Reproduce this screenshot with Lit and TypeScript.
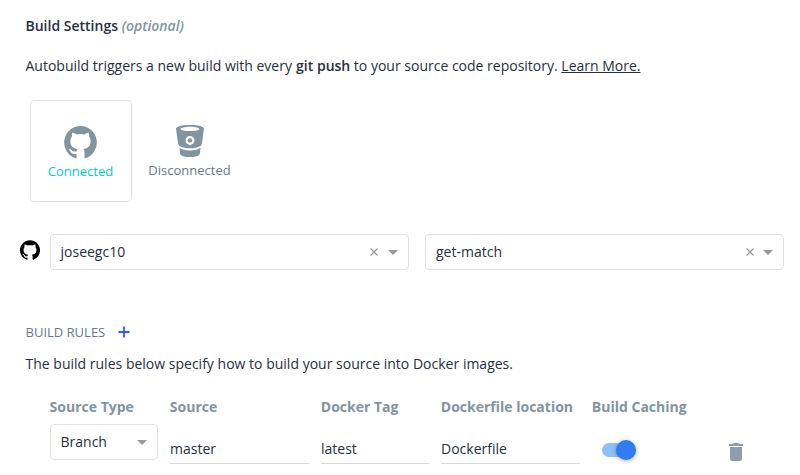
import { LitElement, html, css, svg } from "lit";
import { customElement, property } from "lit/decorators.js";

const CAT =
  "M16.3 0C7.3 0 0 7.3 0 16.3c0 7.2 4.7 13.3 11.1 15.5.8.1 1.1-.4 1.1-.8v-2.8c-4.5 1-5.5-2.2-5.5-2.2-.7-1.9-1.8-2.4-1.8-2.4-1.5-1 .1-1 .1-1 1.6.1 2.5 1.7 2.5 1.7 1.5 2.5 3.8 1.8 4.7 1.4.1-1.1.6-1.8 1-2.2-3.6-.4-7.4-1.8-7.4-8.1 0-1.8.6-3.2 1.7-4.4-.1-.3-.7-2 .2-4.2 0 0 1.4-.4 4.5 1.7 1.3-.4 2.7-.5 4.1-.5s2.8.2 4.1.5c3.1-2.1 4.5-1.7 4.5-1.7.9 2.2.3 3.9.2 4.3 1 1.1 1.7 2.6 1.7 4.4 0 6.3-3.8 7.6-7.4 8 .6.5 1.1 1.500 1.1 3V31c0 .4.3.9 1.1.8 6.500-2.200 11.100-8.300 11.100-15.500C32.600 7.300 25.300 0 16.300 0z";
const BADGE_CAT =
  "M16.500 0A16.500 16.500 0 0 0 11.600 32.200L12.500 32V28.100C9.300 28.500 7.700 27.700 6.800 26.100 6.200 25 5.600 24.200 4.700 23.600 4.500 23.100 5.800 22.900 6.800 23.600 7.900 24.400 8.200 26.200 12.600 25.400 12.700 24.300 13.100 23.500 13.700 23 9 22.300 6.400 20 6.400 15.200 6.400 13 7 11.500 8.100 10.200 7.700 8.900 7.800 7.900 8.200 6.700 9.700 6.600 11.200 7.400 12.600 8.400A17 17 0 0 1 20.400 8.400C21.800 7.400 23.300 6.600 24.800 6.700 25.200 7.900 25.300 8.900 24.900 10.200 26 11.500 26.600 13 26.600 15.200 26.600 20 24 22.300 19.300 23 20.100 23.600 20.500 24.600 20.500 26V32L21.400 32.200A16.500 16.500 0 0 0 16.500 0z";

@customElement("select-box")
export class SelectBox extends LitElement {
  @property() value = "";
  @property({ type: Boolean }) clearable = false;

  static styles = css`
    :host {
      box-sizing: border-box;
      display: flex;
      align-items: center;
      height: 36px;
      padding: 0 10px 0 9.5px;
      border: 1px solid #e0e2e5;
      border-radius: 4px;
      background: #fff;
      color: #27303d;
    }
    .value {
      flex: 1;
    }
    .clear {
      width: 8px;
      height: 8px;
      margin-right: var(--clear-gap, 10px);
      stroke: #999;
      stroke-width: 1.2;
    }
    .arrow {
      border: 5px solid transparent;
      border-top-color: #999;
      border-bottom: 0;
      margin-top: 1px;
    }
  `;

  render() {
    return html`<span class="value">${this.value}</span>
      ${this.clearable
        ? html`<svg class="clear" viewBox="0 0 8 8"><path d="M.5.5l7 7M7.5.5l-7 7" /></svg>`
        : null}
      <span class="arrow"></span>`;
  }
}

@customElement("app-root")
export class AppRoot extends LitElement {
  static styles = css`
    :host {
      box-sizing: border-box;
      display: block;
      width: 800px;
      height: 475px;
      overflow: hidden;
      padding: 16px 16px 0 25.5px;
      background: #fff;
      color: #27303d;
      font: 14px/20px "Open Sans", sans-serif;
    }
    .title {
      font-weight: 600;
    }
    .optional {
      color: #8394a1;
      font-style: italic;
    }
    .intro {
      margin-top: 20px;
    }
    .intro b {
      font-weight: 600;
      margin-left: 0.5px;
    }
    .link {
      text-decoration: underline;
    }
    .providers {
      display: flex;
      gap: 7px;
      margin: 24px 0 0 4.5px;
    }
    .provider {
      box-sizing: border-box;
      width: 102px;
      height: 102px;
      display: flex;
      flex-direction: column;
      align-items: center;
      padding: 25px 1px 0 0;
      color: #677a8c;
      font-size: 13px;
    }
    .provider.on {
      border: 1px solid #e0e2e5;
      border-radius: 4px;
      color: #00d1c6;
    }
    .provider svg {
      width: 33px;
      height: 33px;
      fill: #8394a1;
      margin-bottom: 2px;
    }
    .repo {
      display: flex;
      align-items: center;
      margin: 32px 0 0 -5.5px;
    }
    .repo > svg {
      width: 20px;
      height: 20px;
      margin: 0 10px 4px 0;
    }
    .repo select-box {
      width: 359px;
    }
    .repo select-box + select-box {
      margin-left: 16px;
      padding: 0 10px;
      --clear-gap: 9px;
    }
    .section {
      display: flex;
      align-items: center;
      gap: 13px;
      margin-top: 52px;
      color: #677a8c;
      font-size: 13px;
    }
    .plus {
      width: 12px;
      height: 12px;
      stroke: #2f5cff;
      stroke-width: 1.8;
    }
    .desc {
      margin-top: 12px;
      word-spacing: 0.05px;
    }
    .rules {
      display: grid;
      grid-template-columns: 108px 139px 108px 139px 108px 40px;
      column-gap: 12px;
      margin: 23px 0 0 24.5px;
    }
    .head {
      height: 27px;
      margin-left: -0.2px;
      color: #8394a1;
      font-weight: 700;
      white-space: nowrap;
    }
    .head:first-child {
      margin-left: -0.4px;
    }
    .field {
      box-sizing: border-box;
      height: 40px;
      padding-top: 15px;
      border-bottom: 1px solid #d9dbde;
    }
    .toggle {
      width: 30px;
      height: 14px;
      margin: 19px 0 0 10px;
      border-radius: 7px;
      background: #8fc0f8;
      display: flex;
      align-items: center;
    }
    .knob {
      flex: none;
      width: 20px;
      height: 20px;
      margin-left: 14px;
      border-radius: 50%;
      background: #2f7df0;
      box-shadow: 0 1px 4px rgba(0, 0, 0, 0.35);
    }
    .trash {
      width: 14px;
      height: 18px;
      margin: 19px 0 0 17px;
      fill: #8f9dab;
    }
  `;

  private heads = ["Source Type", "Source", "Docker Tag", "Dockerfile location", "Build Caching", ""];
  private fields = ["master", "latest", "Dockerfile"];

  private bucket = svg`
    <path fill-rule="evenodd" d="M17 0C8.5 0 3 1.6 3 3.8L5.200 19C5.500 21.500 10.500 23.300 17 23.300S28.500 21.500 28.800 19L31 3.800C31 1.600 25.500 0 17 0zM17 1.700c5.500 0 9.300 1 9.300 2.200s-3.800 2.200-9.300 2.200-9.300-1-9.300-2.200 3.800-2.200 9.300-2.200zM17 10.900a4.500 4.500 0 1 1 0 9 4.500 4.500 0 0 1 0-9z"/>
    <circle cx="17" cy="15.400" r="2.200"/>
    <path d="M6.400 22.700C8.500 24.400 12.500 25.400 17 25.400s8.500-1 10.600-2.700L26.800 28.900C26.200 30.800 22.500 32 17 32S7.800 30.800 7.200 28.900z"/>`;

  render() {
    return html`
      <div class="title">Build Settings <span class="optional">(optional)</span></div>
      <div class="intro">
        Autobuild triggers a new build with every <b>git push</b> to your source code repository.
        <span class="link">Learn More.</span>
      </div>
      <div class="providers">
        <div class="provider on">
          <svg viewBox="0 0 33 33"><path d=${BADGE_CAT} /></svg>
          <span>Connected</span>
        </div>
        <div class="provider">
          <svg viewBox="0 0 33 33">${this.bucket}</svg>
          <span>Disconnected</span>
        </div>
      </div>
      <div class="repo">
        <svg viewBox="0 0 32.6 31.8"><path d=${CAT} /></svg>
        <select-box value="joseegc10" clearable></select-box>
        <select-box value="get-match" clearable></select-box>
      </div>
      <div class="section">
        BUILD RULES
        <svg class="plus" viewBox="0 0 12 12"><path d="M6 .5v11M.5 6h11" /></svg>
      </div>
      <div class="desc">The build rules below specify how to build your source into Docker images.</div>
      <div class="rules">
        ${this.heads.map((h) => html`<div class="head">${h}</div>`)}
        <select-box value="Branch"></select-box>
        ${this.fields.map((f) => html`<div class="field">${f}</div>`)}
        <div class="toggle"><span class="knob"></span></div>
        <svg class="trash" viewBox="0 0 14 18">
          <path d="M0 1h3.500l1-1h5l1 1H14v2H0zM1 4h12v12a2 2 0 0 1-2 2H3a2 2 0 0 1-2-2z" />
        </svg>
      </div>
    `;
  }
}
